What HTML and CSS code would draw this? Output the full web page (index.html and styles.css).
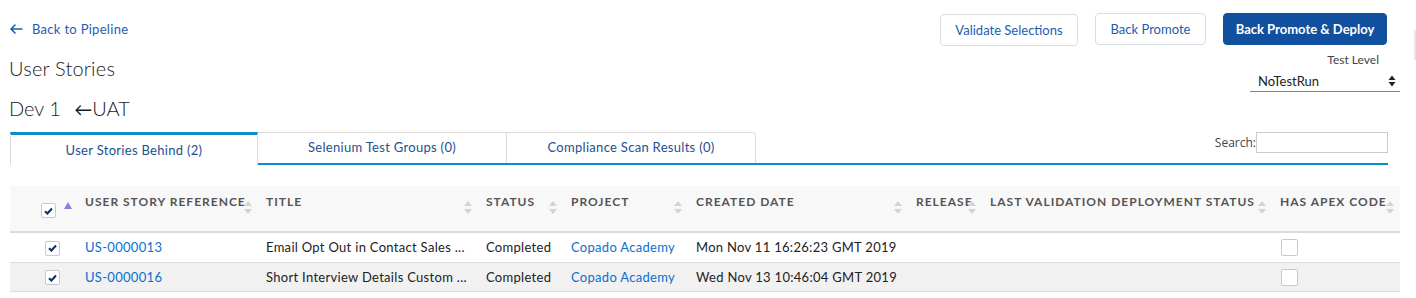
FILE: index.html
```html
<!DOCTYPE html>
<html lang="en">
<head>
<meta charset="utf-8">
<title>User Stories</title>
<link rel="stylesheet" href="styles.css">
</head>
<body>
<div class="page">
  <div class="page-header">
    <div class="header-left">
      <a class="back-link" href="#">
        <svg class="back-arrow" width="13" height="10" viewBox="0 0 13 10"><path d="M5 1 L1 5 L5 9 M1 5 H12" fill="none" stroke="#1b5db3" stroke-width="1.6" stroke-linecap="round" stroke-linejoin="round"/></svg>
        <span>Back to Pipeline</span>
      </a>
      <h1 class="title">User Stories</h1>
      <h2 class="subtitle">Dev 1 <span class="arrow-sep">&larr;</span>UAT</h2>
    </div>
    <div class="header-right">
      <div class="buttons">
        <button class="btn btn-validate">Validate Selections</button>
        <button class="btn btn-back">Back Promote</button>
        <button class="btn btn-brand">Back Promote &amp; Deploy</button>
      </div>
      <div class="test-level">
        <label class="test-label">Test Level</label>
        <div class="select">
          <span>NoTestRun</span>
          <svg width="8" height="12" viewBox="0 0 8 12"><path d="M4 0.5 L7.5 5 H0.5 Z M4 11.5 L7.5 7 H0.5 Z" fill="#222"/></svg>
        </div>
      </div>
    </div>
    <div class="scroll-edge"></div>
  </div>

  <div class="tabs-row">
    <div class="tabs">
      <div class="tab active">User Stories Behind (2)</div>
      <div class="tab">Selenium Test Groups (0)</div>
      <div class="tab last">Compliance Scan Results (0)</div>
    </div>
    <div class="search">
      <label>Search:</label>
      <input type="text" class="search-input">
    </div>
  </div>

  <table class="grid">
    <colgroup>
      <col style="width:67px">
      <col style="width:181px">
      <col style="width:220px">
      <col style="width:85px">
      <col style="width:125px">
      <col style="width:220px">
      <col style="width:74px">
      <col style="width:290px">
      <col style="width:128px">
    </colgroup>
    <thead>
      <tr>
        <th class="th-check">
          <span class="cb checked hdr-cb"><svg width="9" height="8" viewBox="0 0 9 8"><path d="M1 4.2 L3.4 6.5 L8 1.5" fill="none" stroke="#0b2d6b" stroke-width="2"/></svg></span>
          <span class="asc"></span>
        </th>
        <th><span class="hd">User Story Reference</span><span class="sort"></span></th>
        <th><span class="hd">Title</span><span class="sort"></span></th>
        <th><span class="hd">Status</span><span class="sort"></span></th>
        <th><span class="hd">Project</span><span class="sort"></span></th>
        <th><span class="hd">Created Date</span><span class="sort"></span></th>
        <th><span class="hd">Release</span><span class="sort"></span></th>
        <th><span class="hd">Last Validation Deployment Status</span><span class="sort"></span></th>
        <th><span class="hd">Has Apex Code</span><span class="sort"></span></th>
      </tr>
    </thead>
    <tbody>
      <tr>
        <td class="td-check"><span class="cb checked"><svg width="9" height="8" viewBox="0 0 9 8"><path d="M1 4.2 L3.4 6.5 L8 1.5" fill="none" stroke="#0b2d6b" stroke-width="2"/></svg></span></td>
        <td><a href="#">US-0000013</a></td>
        <td>Email Opt Out in Contact Sales ...</td>
        <td>Completed</td>
        <td><a href="#">Copado Academy</a></td>
        <td>Mon Nov 11 16:26:23 GMT 2019</td>
        <td></td>
        <td></td>
        <td><span class="cb big"></span></td>
      </tr>
      <tr class="alt">
        <td class="td-check"><span class="cb checked"><svg width="9" height="8" viewBox="0 0 9 8"><path d="M1 4.2 L3.4 6.5 L8 1.5" fill="none" stroke="#0b2d6b" stroke-width="2"/></svg></span></td>
        <td><a href="#">US-0000016</a></td>
        <td>Short Interview Details Custom ...</td>
        <td>Completed</td>
        <td><a href="#">Copado Academy</a></td>
        <td>Wed Nov 13 10:46:04 GMT 2019</td>
        <td></td>
        <td></td>
        <td><span class="cb big"></span></td>
      </tr>
    </tbody>
  </table>
</div>
</body>
</html>
```

FILE: styles.css
```css
* { box-sizing: border-box; }
html, body { margin: 0; padding: 0; background: #fff; }
body {
  font-family: Lato, "Noto Sans", sans-serif;
  color: #222;
  font-size: 13px;
}
.page { padding: 0 16px 0 10px; position: relative; }

.page-header {
  display: flex;
  justify-content: space-between;
  align-items: flex-start;
}
.header-left { padding-top: 20px; }
.back-link {
  display: flex;
  align-items: center;
  gap: 9px;
  height: 18px;
  color: #1b5db3;
  text-decoration: none;
  font-size: 13px;
  letter-spacing: 0.3px;
}
.back-arrow { display: block; }
.title {
  margin: 18px 0 0 -1px;
  font-size: 20px;
  line-height: 24px;
  font-weight: 300;
  color: #1a1a1a;
  letter-spacing: 0.2px;
}
.subtitle {
  margin: 16px 0 0 -1px;
  font-size: 20px;
  line-height: 24px;
  font-weight: 300;
  color: #1a1a1a;
}
.arrow-sep { margin-left: 8px; font-size: 18px; font-weight: 400; }

.header-right {
  display: flex;
  flex-direction: column;
  align-items: flex-end;
  padding-top: 13px;
}
.buttons {
  display: flex;
  gap: 17px;
  margin-right: 13px;
  align-items: flex-start;
}
.btn {
  font-family: Lato, "Noto Sans", sans-serif;
  font-size: 13px;
  height: 32px;
  border: 1px solid #d8dde6;
  border-radius: 4px;
  background: #fff;
  color: #1b5db3;
  padding: 0;
}
.btn-validate { width: 138px; margin-top: 1px; }
.btn-back { width: 111px; }
.btn-brand {
  width: 164px;
  background: #10509e;
  border-color: #10509e;
  color: #fff;
  font-weight: 700;
}
.test-level {
  display: flex;
  flex-direction: column;
  align-items: flex-end;
  margin-top: 7px;
}
.test-label {
  font-size: 12px;
  color: #444;
  line-height: 14px;
  margin-right: 21px;
}
.select {
  width: 150px;
  height: 21px;
  margin-top: 4px;
  border-bottom: 1px solid #888;
  display: flex;
  align-items: center;
  justify-content: space-between;
  padding: 0 4px 0 8px;
  font-size: 13px;
  color: #222;
}
.scroll-edge {
  position: absolute;
  right: 0;
  top: 30px;
  width: 2px;
  height: 30px;
  background: #e6e6e6;
}

.tabs-row {
  margin-top: 11px;
  margin-right: 12px;
  display: flex;
  justify-content: space-between;
  align-items: flex-start;
  border-bottom: 2px solid #0b8ecf;
  height: 33px;
}
.tabs { display: flex; height: 33px; }
.tab {
  width: 249px;
  height: 31px;
  border: 1px solid #dddbda;
  border-left: none;
  border-bottom: none;
  display: flex;
  align-items: center;
  justify-content: center;
  color: #1d4f91;
  font-size: 13px;
  letter-spacing: 0.3px;
  padding-bottom: 2px;
}
.tab.active {
  width: 248px;
  height: 33px;
  border-top: 3px solid #0b8ecf;
  border-left: 1px solid #dddbda;
  border-right: 1px solid #dddbda;
  background: #fff;
  padding-bottom: 0;
  margin-bottom: -2px;
  position: relative;
  z-index: 1;
}
.tab.last { border-top-right-radius: 4px; }
.search {
  display: flex;
  align-items: center;
  font-family: "Open Sans", sans-serif;
  font-size: 12px;
  color: #444;
}
.search-input {
  width: 132px;
  height: 21px;
  border: 1px solid #ccc;
  margin: 0;
  padding: 0 4px;
}

.grid {
  margin-top: 21px;
  width: 1390px;
  table-layout: fixed;
  border-collapse: collapse;
}
.grid th {
  background: #f8f8f8;
  height: 46px;
  padding: 8px 0 0 8px;
  vertical-align: top;
  text-align: left;
  position: relative;
}
.hd {
  display: block;
  font-size: 12px;
  font-weight: 700;
  letter-spacing: 1px;
  text-transform: uppercase;
  color: #555;
  line-height: 16px;
  white-space: nowrap;
}
.sort {
  position: absolute;
  right: 6px;
  top: 15px;
  width: 8px;
  height: 13px;
}
.sort::before, .sort::after {
  content: "";
  position: absolute;
  left: 0;
  border-left: 4px solid transparent;
  border-right: 4px solid transparent;
}
.sort::before { top: 0; border-bottom: 5px solid #d4d4d4; }
.sort::after { bottom: 0; border-top: 5px solid #d4d4d4; }
.th-check { padding: 0 !important; }
.hdr-cb { position: absolute; left: 31px; top: 17px; }
.asc {
  position: absolute;
  left: 54px;
  top: 16px;
  width: 0;
  height: 0;
  border-left: 4px solid transparent;
  border-right: 4px solid transparent;
  border-bottom: 7px solid #8a80e4;
}

.grid td {
  height: 29px;
  padding: 0 0 0 8px;
  border-bottom: 1px solid #dddbda;
  font-size: 13px;
  letter-spacing: 0.3px;
  color: #222;
  white-space: nowrap;
  overflow: hidden;
  vertical-align: middle;
}
.grid tbody tr:first-child td { border-top: 2px solid #dddbda; height: 30px; }
.grid tr.alt td { background: #f1f1f1; }
.grid a { color: #0a6fd0; text-decoration: none; }
.td-check { padding-left: 35px !important; }

.cb {
  display: inline-flex;
  align-items: center;
  justify-content: center;
  width: 15px;
  height: 15px;
  border: 1px solid #c9c9c9;
  border-radius: 2px;
  background: #fff;
  vertical-align: middle;
}
.cb.big { width: 17px; height: 17px; margin-left: 1px; }
```
